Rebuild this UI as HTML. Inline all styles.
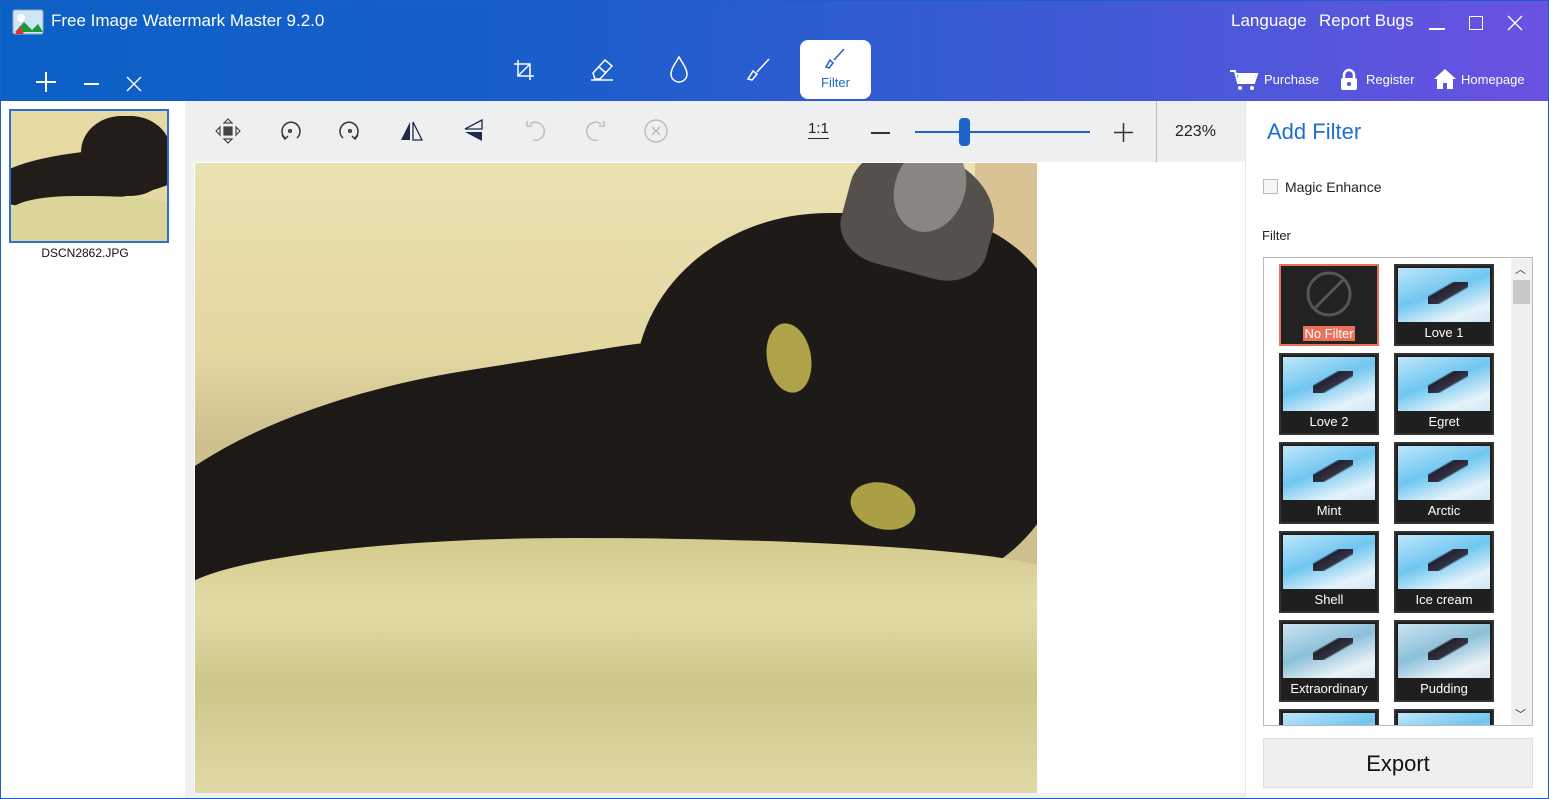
<!DOCTYPE html><html><head><meta charset="utf-8"><style>
*{box-sizing:border-box;margin:0;padding:0}
body{width:1549px;height:799px;overflow:hidden;font-family:"Liberation Sans",sans-serif;background:#fff;position:relative}
.abs{position:absolute}
#top{left:0;top:0;width:1549px;height:101px;background:linear-gradient(90deg,#0b60c6 0%,#1a5ecb 35%,#3f5ad6 70%,#6a52e2 100%)}
.w{color:#fff}
.tb{position:absolute;top:101px;height:61px;background:#eeeff1}
.ic{position:absolute;top:118px}
.tile{position:absolute;width:100px;height:82px;background:#1f1f1f;border:2px solid #333;overflow:hidden}
.tile .im{position:absolute;left:2px;top:2px;width:92px;height:54px;background:linear-gradient(160deg,#bfe6fb 0%,#6fc6f0 45%,#e6f3fb 80%,#cfe6f4 100%)}
.tile .im:after{content:"";position:absolute;left:30px;top:14px;width:40px;height:22px;background:linear-gradient(150deg,transparent 30%,#223 35%,#334 60%,transparent 65%)}
.tile span{position:absolute;left:0;right:0;top:59px;text-align:center;color:#fff;font-size:13px}
</style></head><body>
<div class="abs" id="top"></div>
<div class="abs" style="left:0;top:0;width:1549px;height:799px;border:1px solid #1b5fc6;pointer-events:none;z-index:9"></div>
<svg class="abs" style="left:12px;top:8px" width="34" height="28"><rect x="1" y="2" width="30" height="24" rx="2" fill="#cfe6f7" stroke="#9ab" /><circle cx="9" cy="10" r="4" fill="#fff"/><path d="M3 24 L12 14 L20 22 L26 16 L31 24Z" fill="#1a9a3a"/><path d="M3 26 L8 18 L12 26Z" fill="#d33"/></svg>
<div class="abs w" style="left:51px;top:11px;font-size:17px">Free Image Watermark Master 9.2.0</div>
<div class="abs w" style="left:1231px;top:11px;font-size:17px">Language</div>
<div class="abs w" style="left:1319px;top:11px;font-size:17px">Report Bugs</div>
<div class="abs" style="left:1429px;top:28px;width:16px;height:1.5px;background:#fff"></div>
<div class="abs" style="left:1469px;top:16px;width:14px;height:14px;border:1.5px solid #fff"></div>
<svg class="abs" style="left:1507px;top:15px" width="16" height="16"><path d="M1 1L15 15M15 1L1 15" stroke="#fff" stroke-width="1.4"/></svg>
<svg class="abs" style="left:35px;top:71px" width="22" height="22"><path d="M11 1V21M1 11H21" stroke="#fff" stroke-width="2"/></svg>
<div class="abs" style="left:84px;top:83px;width:15px;height:2px;background:#fff"></div>
<svg class="abs" style="left:126px;top:76px" width="16" height="16"><path d="M1 1L15 15M15 1L1 15" stroke="#fff" stroke-width="1.4"/></svg>
<svg class="abs" style="left:513px;top:59px" width="22" height="22" fill="none" stroke="#fff" stroke-width="1.5"><path d="M5 1V17H21M1 5H17V21M17 5L5 17"/></svg>
<svg class="abs" style="left:589px;top:57px" width="26" height="24" fill="none" stroke="#fff" stroke-width="1.5"><path d="M4 16L16 3L23 9L11 22H6ZM10 10L17 16M2 23H24"/></svg>
<svg class="abs" style="left:669px;top:55px" width="20" height="28" fill="none" stroke="#fff" stroke-width="1.5"><path d="M10 2C14 9 18 14 18 19A8 8 0 0 1 2 19C2 14 6 9 10 2Z"/></svg>
<svg class="abs" style="left:745px;top:57px" width="26" height="24" fill="none" stroke="#fff" stroke-width="1.5"><path d="M24 2L12 15M8 14L12 17L7 23L3 22Z"/></svg>
<div class="abs" style="left:800px;top:40px;width:71px;height:59px;background:#fff;border-radius:8px"></div>
<svg class="abs" style="left:823px;top:47px" width="24" height="24" fill="none" stroke="#1f64c8" stroke-width="1.5"><path d="M21 2L11 13M7 13L10 16L6 21L3 20Z"/></svg>
<div class="abs" style="left:800px;top:75px;width:71px;text-align:center;color:#1f64c8;font-size:13px">Filter</div>
<svg class="abs" style="left:1229px;top:69px" width="30" height="22" fill="#fff"><path d="M1 2H6L9 14H25L28 5H7" stroke="#fff" stroke-width="2" fill="none"/><rect x="9" y="6" width="17" height="7"/><circle cx="11" cy="19" r="2"/><circle cx="23" cy="19" r="2"/></svg>
<div class="abs w" style="left:1264px;top:72px;font-size:13px">Purchase</div>
<svg class="abs" style="left:1340px;top:68px" width="18" height="22"><path d="M4 10V7A5 5 0 0 1 14 7V10" stroke="#fff" stroke-width="2.5" fill="none"/><rect x="1" y="10" width="16" height="12" rx="2" fill="#fff"/><circle cx="9" cy="16" r="2" fill="#5a55dd"/></svg>
<div class="abs w" style="left:1366px;top:72px;font-size:13px">Register</div>
<svg class="abs" style="left:1433px;top:68px" width="24" height="22" fill="#fff"><path d="M12 1L23 11H20V21H14V15H10V21H4V11H1Z"/></svg>
<div class="abs w" style="left:1461px;top:72px;font-size:13px">Homepage</div>

<div class="abs" style="left:1px;top:101px;width:184px;height:697px;background:#fff"></div>
<div class="abs" style="left:185px;top:101px;width:9px;height:697px;background:#f0f0f0"></div>
<div class="abs" style="left:9px;top:109px;width:160px;height:134px;border:2px solid #2b6fd6;overflow:hidden;background:#e6d9a4">
 <div class="abs" style="left:-20px;top:40px;width:200px;height:50px;background:#221d19;border-radius:40%;transform:rotate(-8deg)"></div>
 <div class="abs" style="left:70px;top:5px;width:90px;height:80px;background:#221d19;border-radius:45%"></div>
 <div class="abs" style="left:0;top:85px;width:160px;height:50px;background:#dcd59a;border-radius:40% 50% 0 0/30% 20% 0 0"></div>
</div>
<div class="abs" style="left:0;top:246px;width:170px;text-align:center;font-size:12px;color:#111">DSCN2862.JPG</div>

<div class="tb" style="left:194px;width:962px"></div>
<div class="abs" style="left:1156px;top:101px;width:1px;height:61px;background:#bbb"></div>
<div class="tb" style="left:1157px;width:88px"></div>
<svg class="ic" style="left:215px" width="26" height="26" fill="none" stroke="#444" stroke-width="1.2"><path d="M13 1L17 5H9ZM13 25L17 21H9ZM1 13L5 9V17ZM25 13L21 9V17Z"/><rect x="9" y="9" width="8" height="8" fill="#444"/></svg>
<svg class="ic" style="left:278px" width="24" height="26" fill="none" stroke="#333" stroke-width="1.5"><path d="M7 20A9 9 0 1 1 19 20"/><path d="M4 17L7 21L10 18"/><circle cx="12" cy="13" r="1.3"/></svg>
<svg class="ic" style="left:338px" width="24" height="26" fill="none" stroke="#333" stroke-width="1.5"><path d="M17 20A9 9 0 1 0 5 20"/><path d="M20 17L17 21L14 18"/><circle cx="12" cy="13" r="1.3"/></svg>
<svg class="ic" style="left:399px" width="26" height="26"><path d="M11 4V22H2Z" fill="#1f2a4a"/><path d="M14 4V22H23Z" fill="none" stroke="#1f2a4a" stroke-width="1.3"/></svg>
<svg class="ic" style="left:462px" width="24" height="26"><path d="M20 2V11H3Z" fill="none" stroke="#1f2a4a" stroke-width="1.3"/><path d="M20 14V23L3 14Z" fill="#1f2a4a"/></svg>
<svg class="ic" style="left:524px" width="22" height="26" fill="none" stroke="#bbb" stroke-width="1.4"><path d="M6 6A9 9 0 1 1 9 22M3 3V8H8"/></svg>
<svg class="ic" style="left:585px" width="22" height="26" fill="none" stroke="#bbb" stroke-width="1.4"><path d="M16 6A9 9 0 1 0 13 22M19 3V8H14"/></svg>
<svg class="ic" style="left:643px" width="26" height="26" fill="none" stroke="#bbb" stroke-width="1.4"><circle cx="13" cy="13" r="11"/><path d="M9 9L17 17M17 9L9 17"/></svg>
<div class="abs" style="left:808px;top:120px;font-size:15px;color:#222;border-bottom:1.5px solid #222;line-height:18px">1:1</div>
<div class="abs" style="left:871px;top:132px;width:19px;height:1.5px;background:#333"></div>
<div class="abs" style="left:915px;top:131px;width:175px;height:2px;background:#1f64c8"></div>
<div class="abs" style="left:959px;top:118px;width:11px;height:28px;background:#1f64c8;border-radius:4px"></div>
<svg class="abs" style="left:1114px;top:123px" width="19" height="19"><path d="M9.5 0V19M0 9.5H19" stroke="#333" stroke-width="1.5"/></svg>
<div class="abs" style="left:1175px;top:123px;font-size:16px;color:#222">223%</div>

<div class="abs" style="left:195px;top:163px;width:842px;height:630px;overflow:hidden;background:#e4d9a4">
 <div class="abs" style="left:0;top:0;width:842px;height:630px;background:linear-gradient(180deg,#ebe2b2 0%,#e3d7a2 30%,#cdbf8e 45%)"></div>
 <div class="abs" style="left:780px;top:0;width:62px;height:300px;background:#d9c394"></div>
 <div class="abs" style="left:-80px;top:200px;width:820px;height:270px;background:#1d1916;border-radius:50% 40% 35% 45%/60% 45% 40% 50%;transform:rotate(-9deg)"></div>
 <div class="abs" style="left:440px;top:50px;width:430px;height:380px;background:#1e1a18;border-radius:45% 35% 40% 45%"></div>
 <div class="abs" style="left:650px;top:-10px;width:150px;height:120px;background:#55504c;border-radius:40% 50% 30% 30%;transform:rotate(15deg)"></div>
 <div class="abs" style="left:700px;top:-20px;width:70px;height:90px;background:#8a8580;border-radius:50%;transform:rotate(20deg)"></div>
 <div class="abs" style="left:572px;top:160px;width:44px;height:70px;background:#aea349;border-radius:50%;transform:rotate(-10deg)"></div>
 <div class="abs" style="left:655px;top:320px;width:66px;height:46px;background:#a99f44;border-radius:50%;transform:rotate(15deg)"></div>
 <div class="abs" style="left:-20px;top:375px;width:880px;height:270px;background:linear-gradient(180deg,#d4ca8e 0%,#e2dba4 25%,#cfc68a 55%,#e3dcaa 100%);border-radius:50% 60% 0 0/25% 15% 0 0"></div>
</div>
<div class="abs" style="left:1037px;top:163px;width:208px;height:630px;background:#fff"></div>
<div class="abs" style="left:194px;top:793px;width:1051px;height:5px;background:#f0f0f0"></div>

<div class="abs" style="left:1245px;top:101px;width:303px;height:697px;background:#fff;border-left:1px solid #e6e6e6"></div>
<div class="abs" style="left:1267px;top:119px;font-size:22px;color:#1e6fd0">Add Filter</div>
<div class="abs" style="left:1263px;top:179px;width:15px;height:15px;border:1px solid #bbb;background:#f6f6f6"></div>
<div class="abs" style="left:1285px;top:179px;font-size:14px;color:#222">Magic Enhance</div>
<div class="abs" style="left:1262px;top:228px;font-size:13px;color:#222">Filter</div>
<div class="abs" style="left:1263px;top:257px;width:270px;height:469px;border:1px solid #bbb;overflow:hidden;background:#fff">
 <div class="abs" style="left:247px;top:0;width:21px;height:467px;background:#f0f0f0"></div>
 <div class="abs" style="left:249px;top:22px;width:17px;height:24px;background:#c8c8c8"></div>
 <div class="abs" style="left:251px;top:3px;font-size:11px;color:#333">︿</div>
 <div class="abs" style="left:251px;top:448px;font-size:11px;color:#333">﹀</div>
</div>
<div class="tile" style="left:1279px;top:264px;border-color:#e9735a;background:#222"><svg class="abs" style="left:24px;top:4px" width="48" height="48" fill="none" stroke="#555" stroke-width="3"><circle cx="24" cy="24" r="21"/><path d="M9 39L39 9"/></svg><span style="top:60px"><b style="font-weight:normal;background:#e9735a;padding:0 1px">No Filter</b></span></div>
<div class="tile" style="left:1394px;top:264px"><div class="im"></div><span>Love 1</span></div>
<div class="tile" style="left:1279px;top:353px"><div class="im"></div><span>Love 2</span></div>
<div class="tile" style="left:1394px;top:353px"><div class="im"></div><span>Egret</span></div>
<div class="tile" style="left:1279px;top:442px"><div class="im"></div><span>Mint</span></div>
<div class="tile" style="left:1394px;top:442px"><div class="im"></div><span>Arctic</span></div>
<div class="tile" style="left:1279px;top:531px"><div class="im"></div><span>Shell</span></div>
<div class="tile" style="left:1394px;top:531px"><div class="im"></div><span>Ice cream</span></div>
<div class="tile" style="left:1279px;top:620px"><div class="im" style="filter:saturate(.6)"></div><span>Extraordinary</span></div>
<div class="tile" style="left:1394px;top:620px"><div class="im" style="filter:saturate(.6)"></div><span>Pudding</span></div>
<div class="tile" style="left:1279px;top:709px;height:16px;border-bottom:0"><div class="im"></div></div>
<div class="tile" style="left:1394px;top:709px;height:16px;border-bottom:0"><div class="im"></div></div>
<div class="abs" style="left:1263px;top:738px;width:270px;height:50px;background:#efefef;border:1px solid #ddd;text-align:center;line-height:50px;font-size:22px;color:#111">Export</div>
</body></html>
